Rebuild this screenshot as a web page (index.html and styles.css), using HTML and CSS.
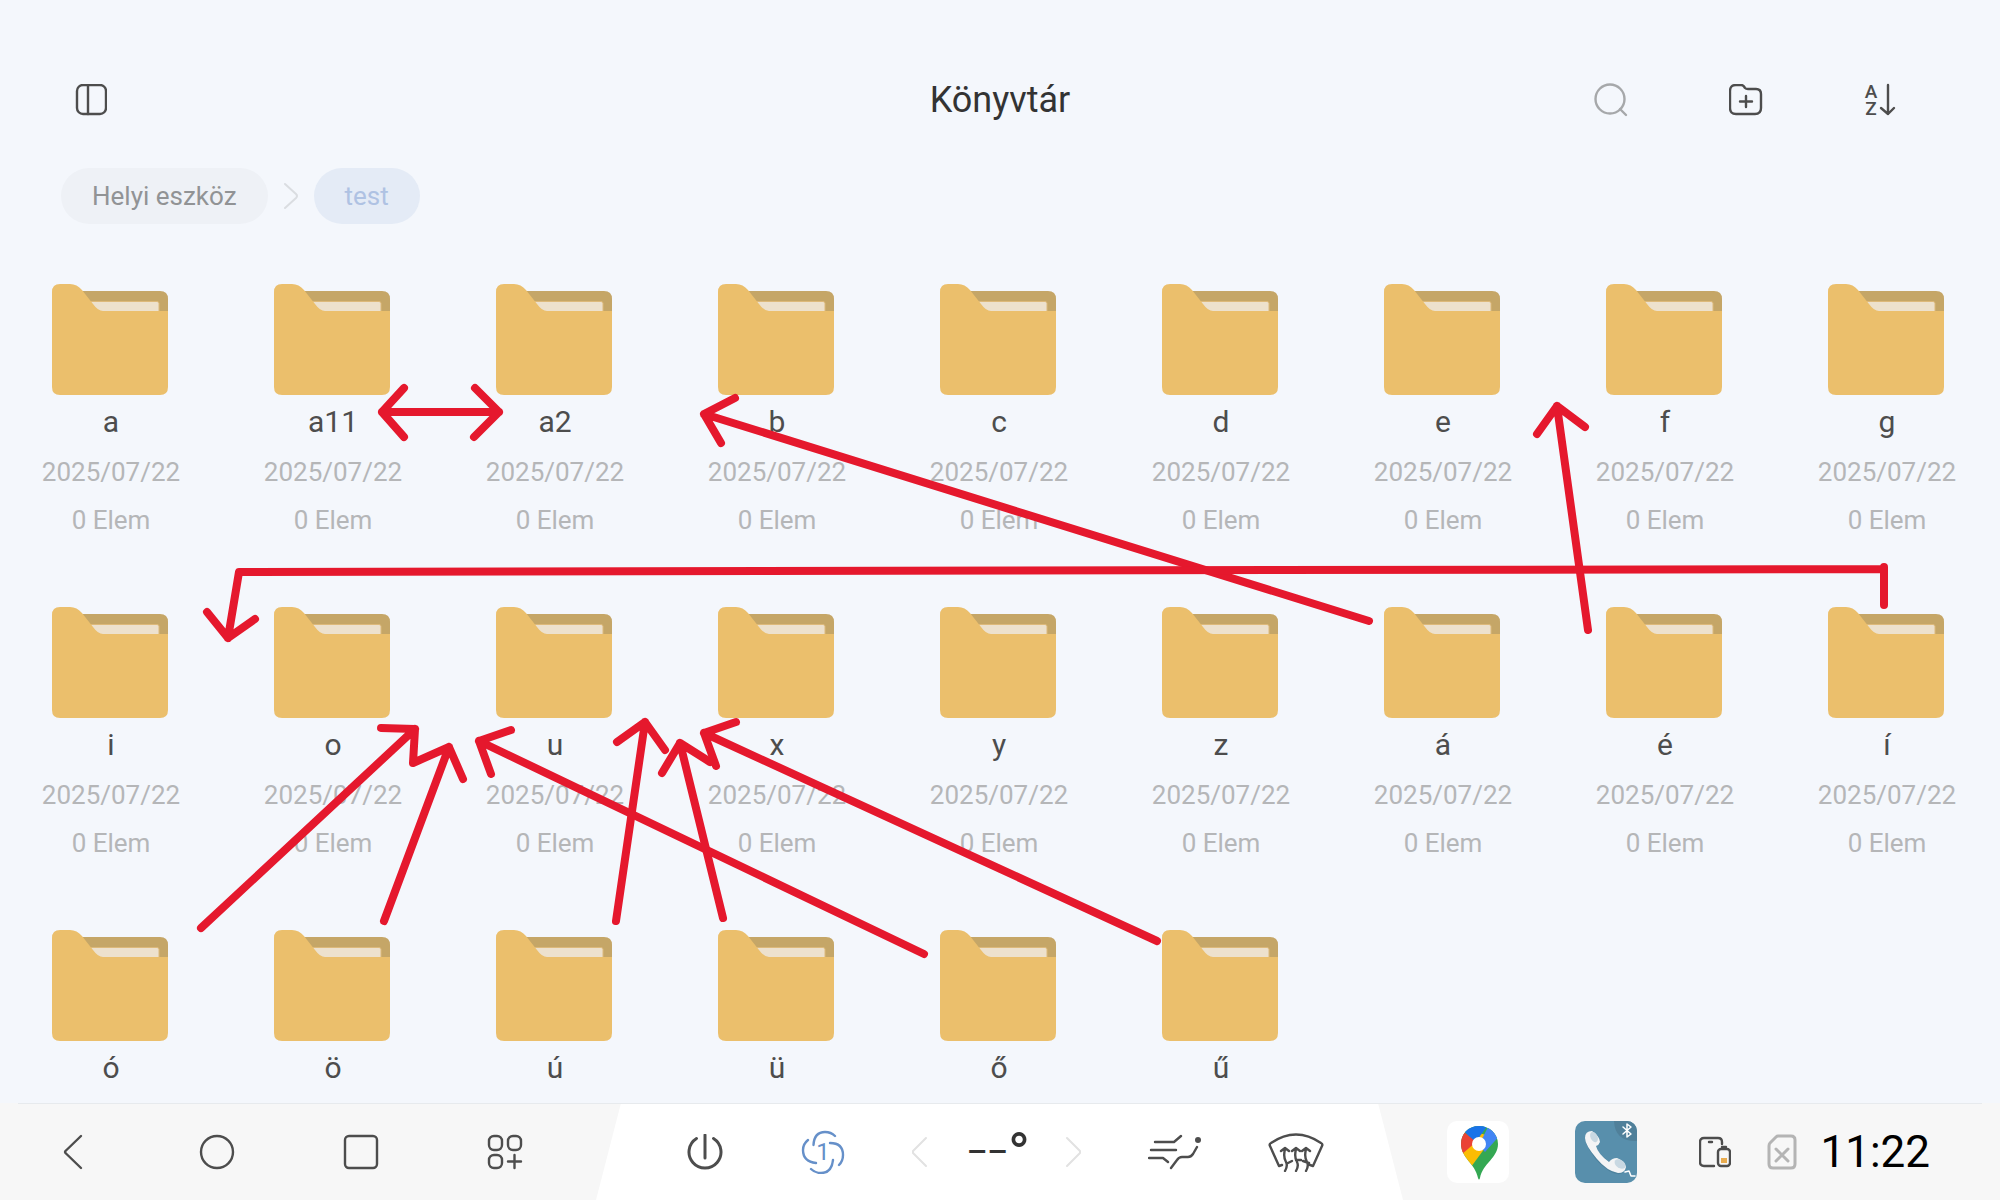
FILE: index.html
```html
<!DOCTYPE html>
<html lang="hu">
<head>
<meta charset="utf-8">
<title>Könyvtár</title>
<link rel="stylesheet" href="styles.css">
</head>
<body>
<svg class="defs" aria-hidden="true">
  <symbol id="folder" viewBox="0 0 116 111">
    <path fill="#c5a667" d="M20 7H108Q116 7 116 15V40H20Z"/>
    <path fill="#ede1cd" stroke="#ddb97a" stroke-width="1" d="M30 17.500H105Q107 17.500 107 19.500V35H30Z"/>
    <path fill="#ebbf6c" d="M8 0H18Q25 0 30 6L41 20Q46 27 51 27H116V103Q116 111 108 111H8Q0 111 0 103V8Q0 0 8 0Z"/>
  </symbol>
</svg>
<div class="app">
  <header class="topbar">
    <button class="icon-btn" aria-label="Oldalsáv"><svg width="32" height="32" viewBox="0 0 32 32"><rect x="2" y="1" width="29" height="29" rx="6"/><path d="M13 1V30"/></svg></button>
    <h1>Könyvtár</h1>
    <div class="actions">
      <button class="icon-btn pale" aria-label="Keresés"><svg width="34" height="34" viewBox="0 0 34 34"><circle cx="16" cy="16" r="14.500"/><path d="M26 26L32 32"/></svg></button>
      <button class="icon-btn" aria-label="Új mappa"><svg width="34" height="32" viewBox="0 0 34 32"><path d="M7 1H12Q14 1 15 2.500L16 4Q17 5 19 5H27Q32 5 32 10V24Q32 30 26 30H7Q1 30 1 24V7Q1 1 7 1ZM17 12V23M11 17.500H23"/></svg></button>
      <button class="icon-btn sort" aria-label="Rendezés"><svg width="32" height="32" viewBox="0 0 32 32"><text x="7" y="14">A</text><text x="7" y="31">Z</text><path d="M24 1V30M17 24L24 30L30 24"/></svg></button>
    </div>
  </header>
  <nav class="crumbs" aria-label="Útvonal">
    <a href="#">Helyi eszköz</a>
    <svg width="16" height="28" viewBox="0 0 16 28"><path d="M2 2L13 12Q15 14 13 16L2 26"/></svg>
    <a href="#" class="current">test</a>
  </nav>
  <main class="grid" id="grid"></main>
  <svg class="notes" viewBox="0 0 2000 1200" preserveAspectRatio="none" aria-hidden="true">
    <path d="M382 412H499M404 388L382 412L404 437M475 388L499 412L474 437"/>
    <path d="M1369 621L704 414M735 398L704 414L721 443"/>
    <path d="M1588 630L1557 406M1537 434L1557 406L1585 427"/>
    <path d="M1884 605V567M1884 569L239 572L228 638M207 612L228 638L255 619"/>
    <path d="M201 928L415 729M381 728L415 729L413 763L449 747L463 779M449 747L384 921"/>
    <path d="M924 954L479 741M511 730L479 741L491 774"/>
    <path d="M616 921L645 722M617 742L645 722L665 750"/>
    <path d="M723 918L680 743M662 773L680 743L710 762"/>
    <path d="M1157 941L704 733M736 722L704 733L716 766"/>
  </svg>
</div>
<footer class="dock">
  <div class="nav">
    <button class="icon-btn" aria-label="Vissza"><svg width="36" height="36" viewBox="0 0 36 36"><path d="M26 2L11 16.500Q9 18 11 19.500L26 34"/></svg></button>
    <button class="icon-btn" aria-label="Kezdőlap"><svg width="36" height="36" viewBox="0 0 36 36"><circle cx="18" cy="18" r="16"/></svg></button>
    <button class="icon-btn" aria-label="Legutóbbiak"><svg width="36" height="36" viewBox="0 0 36 36"><rect x="2" y="2" width="32" height="32" rx="4"/></svg></button>
    <button class="icon-btn" aria-label="Alkalmazások"><svg width="36" height="36" viewBox="0 0 36 36"><rect x="2" y="2" width="13" height="14" rx="5"/><rect x="21" y="2" width="13" height="14" rx="5"/><rect x="2" y="21" width="13" height="13" rx="5"/><path d="M27.500 21V34M21 27.500H34"/></svg></button>
  </div>
  <div class="climate">
    <button class="icon-btn bold" aria-label="Be/ki"><svg width="36" height="36" viewBox="0 0 36 36"><path d="M9.500 4.500A16 16 0 1 0 26.500 4.500M18 1V24"/></svg></button>
    <button class="icon-btn fan" aria-label="Ventilátor 1"><svg width="44" height="44" viewBox="0 0 44 44"><path d="M12.500 15C13 6 17 2 24 2Q30 2 34 6M29 13C38 13 42 17 42 25Q42 31 38 35M32 30C31 39 27 43 20 43Q14 43 10 39M15 33C6 32 2 28 2 20Q2 14 7 10"/></svg><span>1</span></button>
    <div class="temp">
      <button class="icon-btn faint" aria-label="Hidegebb"><svg width="16" height="32" viewBox="0 0 16 32"><path d="M15 2L2 15V17L15 30"/></svg></button>
      <output><span>––</span><span class="deg">°</span></output>
      <button class="icon-btn faint" aria-label="Melegebb"><svg width="16" height="32" viewBox="0 0 16 32"><path d="M1 2L14 15V17L1 30"/></svg></button>
    </div>
    <button class="icon-btn" aria-label="Légáramlás"><svg width="54" height="36" viewBox="0 0 54 36"><path d="M7 8H26L33 2M3 16H28M1 24H15L20 28M23 34L29 26Q31 23 34 23H40Q43 23 45 20L49 13"/><circle cx="50" cy="6" r="3" fill="#4d4d4d" stroke="none"/></svg></button>
    <button class="icon-btn" aria-label="Páramentesítés"><svg width="56" height="40" viewBox="0 0 56 40"><path d="M14 33L11 34L2 14Q1 12 3 11Q28 -6 53 11Q55 12 54 14L45 34L42 33M20 31L24 29M28 28H33M35 29L41 31M17 39Q20 34 18 30Q15 25 17 17M28 39Q31 34 29 30Q26 25 28 17M38 39Q41 34 39 30Q36 25 38 17M13 19L17 16L21 19M24 19L28 16L32 19M34 19L38 16L42 19"/></svg></button>
  </div>
  <div class="status">
    <a href="#" class="tile maps" aria-label="Térkép"><svg width="62" height="62" viewBox="0 0 62 62">
      <clipPath id="pin"><path d="M32 5C21 5 14 13 14 23C14 37 28 42 31 57Q32 60 33 57C36 42 51 37 51 23C51 13 43 5 32 5Z"/></clipPath>
      <g clip-path="url(#pin)"><rect width="62" height="62" fill="#34a853"/><path fill="#fbbc04" d="M10 35L32 12L46 16L24 46L10 50Z"/><path fill="#4285f4" d="M32 24L44 0L62 0V4L38 31Z"/><path fill="#1a73e8" d="M17 10L20 0H44L28 22Z"/><path fill="#ea4335" d="M17 11L29 21L14 34H8V14Z"/></g>
      <circle cx="32" cy="23" r="7" fill="#fff"/></svg></a>
    <a href="#" class="tile phone" aria-label="Telefon"><svg width="62" height="62" viewBox="0 0 62 62">
      <path fill="#50809a" d="M39 0H62V20Q40 21 39 0Z"/>
      <path fill="none" stroke="#fff" stroke-width="1.500" d="M48 6L56 13L52 16V3L56 6L48 13M50 51L54 50L56 55L60 55"/>
      <path fill="#4d829d" d="M10 20Q18 40 34 50Q42 55 48 52L40 46Z"/>
      <path fill="#f3f4f5" d="M10 17Q10 10 17 10Q25 16 25 21Q24 24 21 25Q23 33 34 41Q37 37 42 37Q50 40 51 46Q50 52 43 52Q32 50 22 38Q10 24 10 17Z"/>
      <ellipse cx="19" cy="16" rx="3.500" ry="5.500" transform="rotate(-25 19 16)" fill="#c8d8e2"/><ellipse cx="45" cy="43" rx="6" ry="4" transform="rotate(35 45 43)" fill="#c8d8e2"/></svg></a>
    <svg class="battery" width="32" height="32" viewBox="0 0 32 32"><path d="M15 30H5Q1 30 1 26V6Q1 2 5 2H19Q23 2 23 6V8M10 6H13"/><rect x="19" y="13" width="12" height="17" rx="3"/><path d="M23 11H27"/><path class="charge" d="M22 22H28V27H22Z"/></svg>
    <svg class="sim" width="30" height="36" viewBox="0 0 30 36"><path d="M11 2H24Q28 2 28 6V30Q28 34 24 34H6Q2 34 2 30V12Q2 10 3 9L9 3Q10 2 11 2ZM9 15L21 27M21 15L9 27"/></svg>
    <time datetime="11:22">11:22</time>
  </div>
</footer>
<script src="script.js"></script>
</body>
</html>
```
FILE: styles.css
```css
* { box-sizing: border-box; }
body {
  margin: 0;
  height: 100vh;
  display: flex;
  flex-direction: column;
  background: #f4f7fc;
  color: #4d4d4d;
  font-family: Roboto, "Noto Sans", sans-serif;
  overflow: hidden;
}
a { color: inherit; text-decoration: none; }
svg { display: block; fill: none; stroke: #4d4d4d; stroke-width: 2.4; stroke-linecap: round; stroke-linejoin: round; }
.defs { display: none; }
.icon-btn { display: flex; padding: 0; border: 0; background: none; color: inherit; font: inherit; }
.icon-btn.pale svg { stroke: #a6a8aa; }
.icon-btn.faint svg { stroke: #e2e2e2; stroke-width: 2; }
.icon-btn.bold svg { stroke-width: 3; }
.sort svg { overflow: visible; }
.sort text { fill: #4d4d4d; stroke: none; font-size: 19px; font-weight: 500; text-anchor: middle; }

.app { flex: 1; min-height: 0; overflow: hidden; }
.topbar {
  display: grid;
  grid-template-columns: 1fr auto 1fr;
  align-items: center;
  height: 100px;
  margin-top: 50px;
  padding: 0 104px 0 75px;
}
h1 { margin: 0; font-size: 36px; font-weight: 400; color: #333; padding-left: 29px; }
.actions { display: flex; justify-content: flex-end; align-items: center; gap: 101px; }

.crumbs { display: flex; align-items: center; gap: 15px; margin: 18px 61px 0; font-size: 26px; color: #919395; }
.crumbs a { padding: 0 31px; line-height: 56px; border-radius: 28px; background: #eef1f6; }
.crumbs .current { background: #e4ebf6; color: #afc2e3; }
.crumbs svg { stroke: #dadde1; stroke-width: 2; }

.grid { display: grid; grid-template-columns: repeat(9, 1fr); row-gap: 26px; margin-top: 60px; padding-right: 2px; }
.item { display: flex; flex-direction: column; align-items: center; height: 297px; text-align: center; }
.item svg { stroke: none; margin-right: 2px; }
.item b { margin-top: 6px; font-size: 30px; font-weight: 400; line-height: 42px; }
.item span { margin-top: 10px; font-size: 26px; line-height: 38px; color: #b5b6b8; }

.notes { position: absolute; inset: 0; width: 100%; height: 100%; stroke: none; pointer-events: none; }
.notes path { stroke: #e5182d; stroke-width: 8; }

.dock { display: grid; grid-template-columns: 596px 1fr 597px; align-items: stretch; height: 97px; background: #f7f7f7; position: relative; }
.dock::before { content: ""; position: absolute; top: 0; left: 18px; right: 18px; height: 1px; background: #e7eaed; z-index: 1; }
.nav { display: flex; align-items: center; gap: 108px; padding-left: 55px; }
.climate {
  display: flex;
  align-items: center;
  justify-content: center;
  gap: 66px;
  padding-left: 12px;
  background: #fff;
  clip-path: polygon(25px 0, calc(100% - 25px) 0, 100% 100%, 0 100%);
}
.fan { position: relative; margin-left: 12px; color: #6690c9; }
.fan svg { stroke: #6690c9; }
.fan span { position: absolute; inset: 0; font-size: 24px; line-height: 44px; text-align: center; }
.temp { display: flex; align-items: center; justify-content: space-between; width: 171px; }
output { display: flex; align-items: center; margin-left: 4px; font-size: 32px; font-weight: 500; line-height: 52px; color: #333; }
.deg { padding-top: 6px; font-size: 60px; font-weight: 400; line-height: 60px; }
.status { display: flex; align-items: center; padding: 0 70px 0 44px; }
.tile { width: 62px; height: 62px; border-radius: 10px; overflow: hidden; }
.tile svg { stroke: none; }
.maps { background: #fff; }
.phone { margin-left: 66px; background: #588fac; }
.battery { margin-left: 62px; }
.battery .charge { stroke: none; fill: #e9ac4f; }
.sim { margin-left: 36px; stroke: #b4b4b4; stroke-width: 3; }
time { margin-left: auto; font-size: 44px; color: #000; }
```
FILE: script.js
```js
const COLUMNS = 9;
const DETAILED_ROWS = 2;
const names = ["a", "a11", "a2", "b", "c", "d", "e", "f", "g", "i", "o", "u", "x", "y", "z", "á", "é", "í", "ó", "ö", "ú", "ü", "ő", "ű"];
document.getElementById("grid").innerHTML = names.map((name, i) => {
  // Rows that run under the dock show only their names.
  const details = i < COLUMNS * DETAILED_ROWS ? "<span>2025/07/22</span><span>0 Elem</span>" : "";
  return `<article class="item"><svg width="116" height="111"><use href="#folder"/></svg><b>${name}</b>${details}</article>`;
}).join("");
```
